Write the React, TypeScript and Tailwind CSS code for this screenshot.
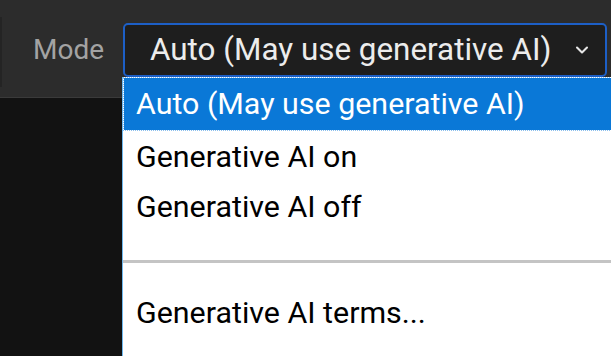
import { ChevronDown } from "lucide-react";

const items = ["Generative AI on", "Generative AI off"];

export default function App() {
  return (
    <div
      className="relative h-[356px] w-[611px] overflow-hidden bg-[#121212]"
      style={{ fontFamily: 'Roboto, "Noto Sans", sans-serif' }}
    >
      {/* toolbar */}
      <div className="flex h-[98px] items-start border-b border-[#3a3a3a] bg-[#2c2c2c] pt-[23px]">
        <div className="mt-[-6px] h-[70px] w-[2px] bg-[#242424]" />
        <span className="ml-[31px] mt-[10px] w-[90px] text-[28px] leading-[34px] text-[#a3a3a3]">Mode</span>
        <div className="flex h-[54px] w-[484px] items-center rounded-[5px] border-2 border-[#1d5fc6] bg-[#1e1e1e] pl-[25px] pr-[13px]">
          <span className="flex-1 text-[31.4px] text-[#ececec]">Auto (May use generative AI)</span>
          <ChevronDown className="h-[20px] w-[20px] text-[#e6e6e6]" strokeWidth={2.5} />
        </div>
      </div>

      {/* dropdown list */}
      <div className="absolute left-[122px] top-[77px] h-[290px] w-[500px] border-l border-[#6fb9ef] bg-white text-[30.4px] text-black">
        <div className="m-[1px] flex h-[52px] items-center bg-[#0a78d7] pl-[12px] text-white outline-1 outline-dotted outline-[#8cc0ee]">
          Auto (May use generative AI)
        </div>
        {items.map((t) => (
          <div key={t} className="flex h-[50px] items-center pl-[13px] pt-[2px]">
            {t}
          </div>
        ))}
        <div className="mt-[29px] h-[3px] bg-[#c4c4c4]" />
        <div className="mt-[24px] flex h-[50px] items-center pl-[13px] pt-[2px]">Generative AI terms...</div>
      </div>
    </div>
  );
}
